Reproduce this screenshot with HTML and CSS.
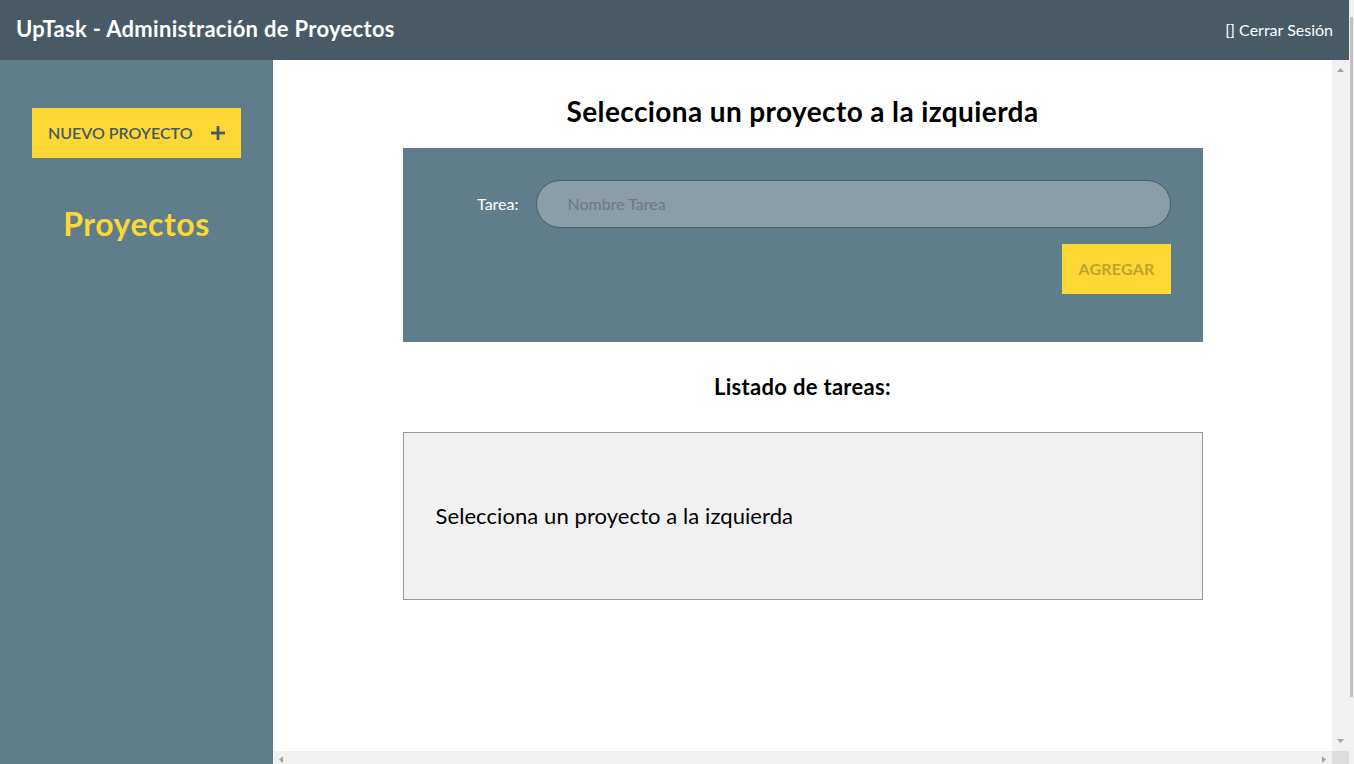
FILE: index.html
```html
<!DOCTYPE html>
<html lang="es">
<head>
<meta charset="utf-8">
<title>UpTask</title>
<link rel="stylesheet" href="styles.css">
</head>
<body>
<div class="app">
  <header class="topbar">
    <h1 class="brand">UpTask - Administración de Proyectos</h1>
    <a class="logout" href="#">[] Cerrar Sesión</a>
  </header>
  <div class="layout">
    <aside class="sidebar">
      <a class="btn-new" href="#">
        <span>Nuevo Proyecto</span>
        <svg class="plus" width="14" height="14" viewBox="0 0 14 14" aria-hidden="true"><rect x="5.6" y="0" width="2.8" height="14" fill="#455a64"/><rect x="0" y="5.6" width="14" height="2.8" fill="#455a64"/></svg>
      </a>
      <h2 class="side-title">Proyectos</h2>
    </aside>
    <div class="pane">
      <main class="main">
        <h1 class="page-title">Selecciona un proyecto a la izquierda</h1>
        <form class="task-form">
          <div class="field">
            <label class="field-label" for="tarea">Tarea:</label>
            <input class="field-input" id="tarea" type="text" placeholder="Nombre Tarea">
          </div>
          <div class="actions">
            <button class="btn-add" type="button">Agregar</button>
          </div>
        </form>
        <h2 class="list-title">Listado de tareas:</h2>
        <div class="task-list">
          <p class="empty">Selecciona un proyecto a la izquierda</p>
        </div>
      </main>
      <div class="vbar">
        <svg class="arrow" width="7" height="4" viewBox="0 0 7 4"><polygon points="0,4 7,4 3.5,0" fill="#a3a3a3"/></svg>
        <svg class="arrow" width="7" height="4" viewBox="0 0 7 4"><polygon points="0,0 7,0 3.5,4" fill="#a3a3a3"/></svg>
      </div>
      <div class="hbar">
        <svg class="arrow" width="4" height="7" viewBox="0 0 4 7"><polygon points="4,0 4,7 0,3.5" fill="#a3a3a3"/></svg>
        <svg class="arrow" width="4" height="7" viewBox="0 0 4 7"><polygon points="0,0 0,7 4,3.5" fill="#a3a3a3"/></svg>
      </div>
      <div class="corner"></div>
    </div>
  </div>
</div>
<div class="page-scroll"><div class="page-thumb"></div></div>
</body>
</html>
```

FILE: styles.css
```css
* { box-sizing: border-box; }

html, body { height: 100%; }

body {
  margin: 0;
  overflow: hidden;
  display: flex;
  font-family: Lato, "Open Sans", "Liberation Sans", sans-serif;
  color: #000;
  background: #fff;
}

.app {
  flex: 1;
  min-width: 0;
  display: flex;
  flex-direction: column;
}

.page-scroll {
  width: 5px;
  flex: none;
  background: #f1f1f1;
  padding: 17px 1px 0;
}
.page-thumb {
  height: 680px;
  background: #c1c1c1;
}

.topbar {
  height: 60px;
  flex: none;
  background: #475a66;
  display: flex;
  align-items: center;
  justify-content: space-between;
  padding: 0 16px 2px;
}
.brand {
  margin: 0;
  color: #fff;
  font-size: 22px;
  font-weight: 700;
  letter-spacing: 0.014em;
  line-height: 1;
}
.logout {
  color: #fff;
  text-decoration: none;
  font-size: 16px;
}

.layout {
  flex: 1;
  min-height: 0;
  display: flex;
}

.sidebar {
  width: 273px;
  flex: none;
  background: #607d8b;
  padding: 48px 32px 0;
  display: flex;
  flex-direction: column;
}
.btn-new {
  height: 50px;
  background: #fdd835;
  display: flex;
  align-items: center;
  justify-content: space-between;
  padding: 0 16px 1px;
  color: #455a64;
  text-decoration: none;
  text-transform: uppercase;
  font-size: 16px;
  font-weight: 600;
}
.plus { display: block; }
.side-title {
  margin: 47px 0 0;
  text-align: center;
  color: #fdd835;
  font-size: 32px;
  font-weight: 700;
  letter-spacing: 0.016em;
  line-height: 38px;
}

.pane {
  flex: 1;
  min-width: 0;
  display: grid;
  grid-template-columns: 1fr 17px;
  grid-template-rows: 1fr 13px;
}

.main {
  min-width: 0;
  overflow: hidden;
  background: #fff;
  display: flex;
  flex-direction: column;
  align-items: center;
}

.vbar {
  background: #f1f1f1;
  display: flex;
  flex-direction: column;
  justify-content: space-between;
  align-items: center;
  padding: 8px 0 8px;
}
.hbar {
  background: #f1f1f1;
  display: flex;
  justify-content: space-between;
  align-items: flex-start;
  padding: 5px 6px 0;
}
.corner { background: #dcdcdc; }
.arrow { display: block; }

.page-title {
  margin: 34px 0 20px;
  font-size: 28px;
  font-weight: 700;
  letter-spacing: 0.014em;
  line-height: 34px;
  text-align: center;
}
.task-form {
  width: 800px;
  flex: none;
  background: #607d8b;
  padding: 32px 32px 48px;
}
.field {
  display: grid;
  grid-template-columns: 84px 1fr;
  column-gap: 17px;
  align-items: center;
}
.field-label {
  text-align: right;
  color: #fff;
  font-size: 16px;
  padding-bottom: 1px;
}
.field-input {
  height: 48px;
  border: 1px solid #4a5f6b;
  border-radius: 24px;
  background: #8a9ea7;
  padding: 0 31px 1px;
  font-family: inherit;
  font-size: 16px;
  color: #333;
  outline: none;
}
.field-input::placeholder { color: #6f797e; }
.actions {
  display: flex;
  justify-content: flex-end;
  margin-top: 16px;
}
.btn-add {
  width: 109px;
  height: 50px;
  border: 0;
  background: #fdd835;
  color: #bfa42c;
  font-family: inherit;
  font-size: 16px;
  font-weight: 700;
  letter-spacing: 0.014em;
  text-transform: uppercase;
  padding: 0 0 2px 1px;
}
.list-title {
  margin: 32px 0;
  font-size: 22px;
  font-weight: 700;
  letter-spacing: 0.014em;
  line-height: 26px;
  text-align: center;
}
.task-list {
  width: 800px;
  height: 168px;
  flex: none;
  background: #f1f1f1;
  border: 1px solid #999;
  display: flex;
  align-items: center;
  padding: 0 32px;
}
.empty {
  margin: 0;
  font-size: 22px;
  letter-spacing: 0.08px;
  line-height: 26px;
}
```
